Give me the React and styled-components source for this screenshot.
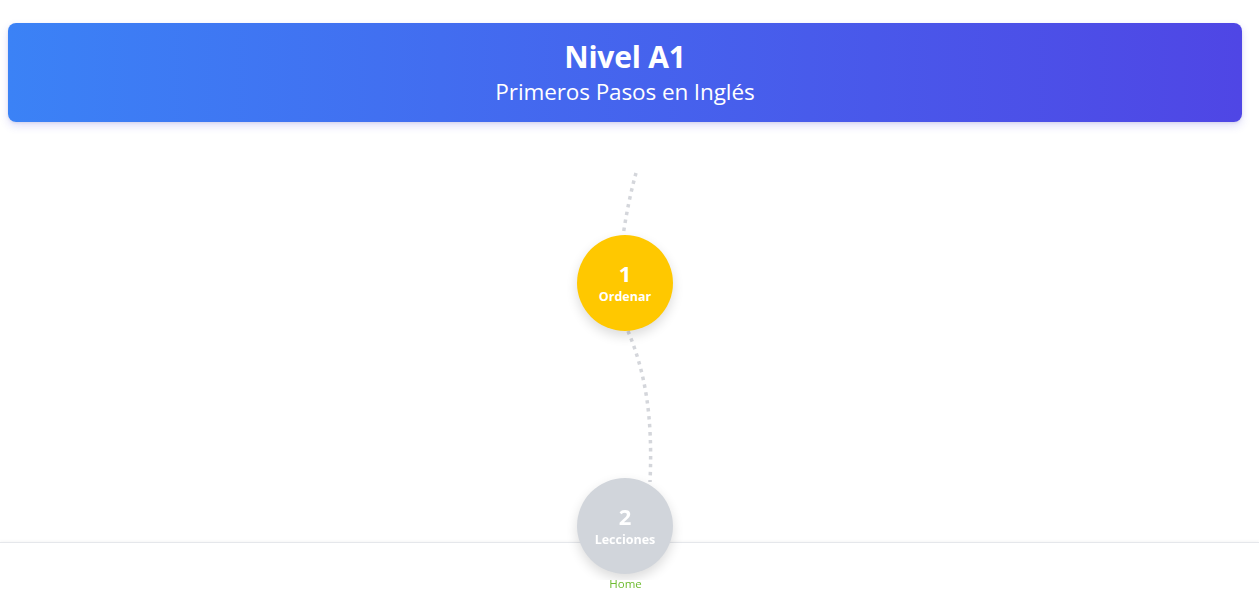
import React from "react";
import styled, { createGlobalStyle } from "styled-components";

const GlobalStyle = createGlobalStyle`
  html, body { margin: 0; padding: 0; background: #ffffff; }
  body { font-family: "Open Sans", "Noto Sans", Arial, sans-serif; color: #111827; }
  * { box-sizing: border-box; }
`;

const Page = styled.main`
  padding: 23px 17px 0 8px;
`;

const Header = styled.header`
  height: 99px;
  border-radius: 8px;
  background: linear-gradient(90deg, #3b82f6 0%, #4f46e5 100%);
  box-shadow: 0 4px 8px rgba(79, 70, 229, 0.18), 0 1px 3px rgba(0, 0, 0, 0.08);
  color: #ffffff;
  display: flex;
  flex-direction: column;
  align-items: center;
  justify-content: center;
  padding-top: 3px;
`;

const Title = styled.h1`
  margin: 0;
  font-size: 30px;
  line-height: 36px;
  font-weight: 700;
  letter-spacing: -0.2px;
`;

const Subtitle = styled.p`
  margin: 0;
  font-size: 22.5px;
  line-height: 34px;
  font-weight: 400;
  letter-spacing: -0.1px;
`;

const PathArea = styled.section`
  position: relative;
  margin-top: 18px;
  height: 440px;
`;

const Trail = styled.svg`
  position: absolute;
  top: 0;
  left: 50%;
  transform: translateX(-100px);
  width: 200px;
  height: 440px;
  overflow: visible;
  z-index: 0;
`;

const NodeList = styled.ol`
  list-style: none;
  margin: 0;
  padding: 95px 0 0;
  display: flex;
  flex-direction: column;
  align-items: center;
  gap: 147px;
`;

const Node = styled.li`
  position: relative;
  z-index: 60;
  width: 96px;
  height: 96px;
  border-radius: 50%;
  background: ${(p) => (p.$active ? "#ffc800" : "#d1d5db")};
  box-shadow: 0 5px 12px rgba(0, 0, 0, 0.14);
  color: #ffffff;
  display: flex;
  flex-direction: column;
  align-items: center;
  justify-content: center;
  cursor: pointer;
`;

const NodeNumber = styled.span`
  font-size: 22px;
  line-height: 26px;
  font-weight: 700;
`;

const NodeLabel = styled.span`
  font-size: 12.5px;
  line-height: 18px;
  font-weight: 700;
  margin-top: 2px;
`;

const BottomNav = styled.nav`
  position: fixed;
  left: 0;
  right: 0;
  bottom: 0;
  height: 55px;
  background: #ffffff;
  border-top: 1px solid #e5e7eb;
  box-shadow: 0 -1px 3px rgba(0, 0, 0, 0.04);
  z-index: 50;
  display: flex;
  justify-content: center;
  align-items: flex-end;
  padding-bottom: 5px;
`;

const NavItem = styled.a`
  font-size: 11.5px;
  line-height: 16px;
  color: #6dbb2f;
  text-decoration: none;
  margin-left: -8px;
`;

const lessons = [
  { n: 1, label: "Ordenar", active: true },
  { n: 2, label: "Lecciones", active: false },
];

export default function App() {
  return (
    <>
      <GlobalStyle />
      <Page>
        <Header>
          <Title>Nivel A1</Title>
          <Subtitle>Primeros Pasos en Inglés</Subtitle>
        </Header>
        <PathArea>
          <Trail viewBox="0 0 200 440">
            <path
              d="M 111 33 Q 103 62 98 96"
              fill="none"
              stroke="#d4d6db"
              strokeWidth="3.5"
              strokeDasharray="3.5 4.5"
            />
            <path
              d="M 103 191 C 120 232 128 275 125 342"
              fill="none"
              stroke="#d4d6db"
              strokeWidth="3.5"
              strokeDasharray="3.5 4.5"
            />
          </Trail>
          <NodeList>
            {lessons.map((l) => (
              <Node key={l.n} $active={l.active}>
                <NodeNumber>{l.n}</NodeNumber>
                <NodeLabel>{l.label}</NodeLabel>
              </Node>
            ))}
          </NodeList>
        </PathArea>
      </Page>
      <BottomNav>
        <NavItem href="#">Home</NavItem>
      </BottomNav>
    </>
  );
}
